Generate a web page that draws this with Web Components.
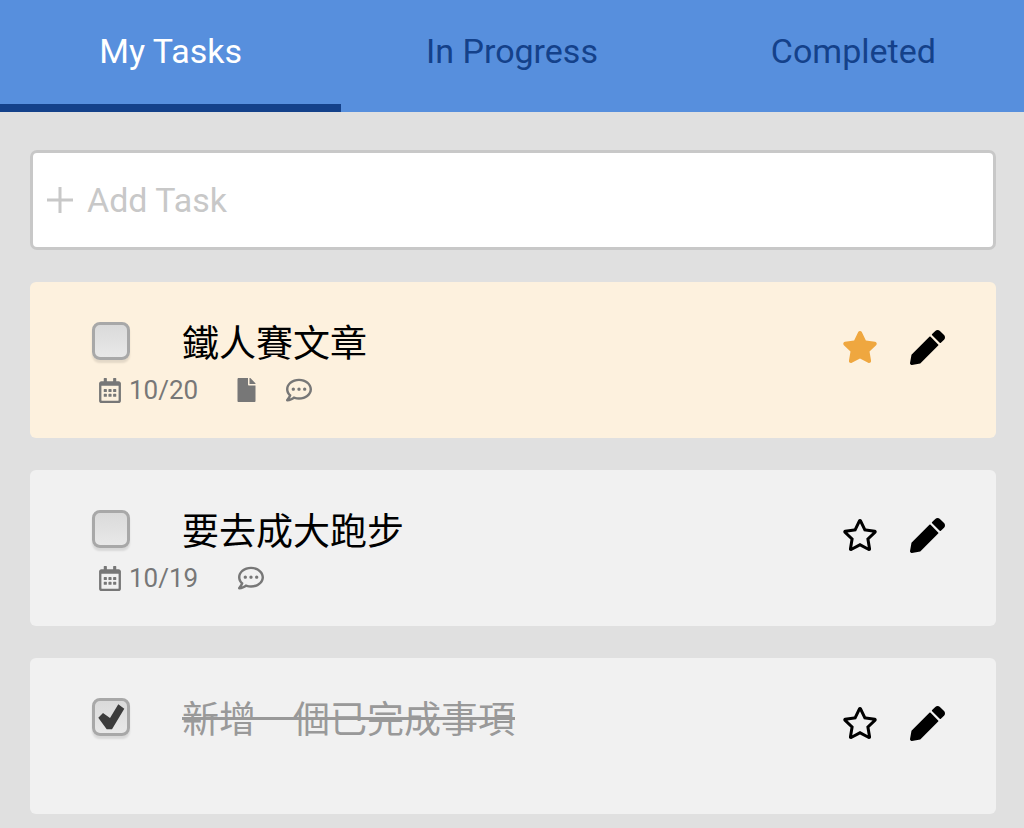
<!DOCTYPE html>
<html lang="zh-Hant"><head><meta charset="utf-8"><title>Tasks</title>
<style>
html,body{margin:0;padding:0;background:#e0e0e0}
body{font-family:Roboto,"Noto Sans CJK TC",sans-serif;height:828px;overflow:hidden}
</style></head>
<body>
<task-app>
  <task-tabs slot="tabs">
    <tab-item active>My Tasks</tab-item>
    <tab-item>In Progress</tab-item>
    <tab-item>Completed</tab-item>
  </task-tabs>
  <add-task placeholder="Add Task"></add-task>
  <task-card title-text="鐵人賽文章" starred date="10/20" file comment></task-card>
  <task-card title-text="要去成大跑步" date="10/19" comment></task-card>
  <task-card title-text="新增一個已完成事項" done></task-card>
</task-app>
<script>
const P={
 star:['0 0 576 512','M259.3 17.8L194 150.2 47.9 171.5c-26.2 3.8-36.7 36.1-17.7 54.6l105.7 103-25 145.5c-4.5 26.3 23.2 46 46.4 33.7L288 439.6l130.7 68.7c23.2 12.2 50.9-7.4 46.4-33.7l-25-145.5 105.7-103c19-18.5 8.5-50.8-17.7-54.6L382 150.2 316.7 17.8c-11.7-23.6-45.6-23.9-57.4 0z'],
 starO:['0 0 576 512','M528.1 171.5L382 150.2 316.7 17.8c-11.7-23.6-45.6-23.9-57.4 0L194 150.2 47.9 171.5c-26.2 3.8-36.7 36.1-17.7 54.6l105.7 103-25 145.5c-4.5 26.3 23.2 46 46.4 33.7L288 439.6l130.7 68.7c23.2 12.2 50.9-7.4 46.4-33.7l-25-145.5 105.7-103c19-18.5 8.5-50.8-17.7-54.6zM388.6 312.3l23.7 138.4L288 385.4l-124.3 65.3 23.7-138.4-100.6-98 139-20.2 62.2-126 62.2 126 139 20.2-100.6 98z'],
 pen:['0 0 512 512','M497.9 142.1l-46.1 46.1c-4.7 4.7-12.3 4.7-17 0l-111-111c-4.7-4.7-4.7-12.3 0-17l46.1-46.1c18.7-18.7 49.1-18.7 67.9 0l60.1 60.1c18.8 18.7 18.8 49.1 0 67.9zM284.2 99.8L21.6 362.4.4 483.9c-2.9 16.4 11.4 30.6 27.8 27.8l121.5-21.3 262.6-262.6c4.7-4.7 4.7-12.3 0-17l-111-111c-4.8-4.7-12.4-4.7-17.1 0z'],
 cal:['0 0 448 512','M148 288h-40c-6.6 0-12-5.4-12-12v-40c0-6.6 5.4-12 12-12h40c6.6 0 12 5.4 12 12v40c0 6.6-5.4 12-12 12zm108-12v-40c0-6.6-5.4-12-12-12h-40c-6.6 0-12 5.4-12 12v40c0 6.6 5.4 12 12 12h40c6.6 0 12-5.4 12-12zm96 0v-40c0-6.6-5.4-12-12-12h-40c-6.6 0-12 5.4-12 12v40c0 6.6 5.4 12 12 12h40c6.6 0 12-5.4 12-12zm-96 96v-40c0-6.6-5.4-12-12-12h-40c-6.6 0-12 5.4-12 12v40c0 6.6 5.4 12 12 12h40c6.6 0 12-5.4 12-12zm-96 0v-40c0-6.6-5.4-12-12-12h-40c-6.6 0-12 5.4-12 12v40c0 6.6 5.4 12 12 12h40c6.6 0 12-5.4 12-12zm192 0v-40c0-6.6-5.4-12-12-12h-40c-6.6 0-12 5.4-12 12v40c0 6.6 5.4 12 12 12h40c6.6 0 12-5.4 12-12zm96-260v352c0 26.5-21.5 48-48 48H48c-26.5 0-48-21.5-48-48V112c0-26.5 21.5-48 48-48h48V12c0-6.6 5.4-12 12-12h40c6.6 0 12 5.4 12 12v52h128V12c0-6.6 5.4-12 12-12h40c6.6 0 12 5.4 12 12v52h48c26.5 0 48 21.5 48 48zm-48 346V160H48v298c0 3.3 2.7 6 6 6h340c3.3 0 6-2.7 6-6z'],
 file:['0 0 384 512','M224 136V0H24C10.7 0 0 10.7 0 24v464c0 13.3 10.7 24 24 24h336c13.3 0 24-10.7 24-24V160H248c-13.2 0-24-10.8-24-24zm160-14.1v6.1H256V0h6.1c6.4 0 12.5 2.5 17 7l97.9 98c4.5 4.5 7 10.6 7 16.9z'],
 comment:['0 0 512 512','M144 208c-17.7 0-32 14.3-32 32s14.3 32 32 32 32-14.3 32-32-14.3-32-32-32zm112 0c-17.7 0-32 14.3-32 32s14.3 32 32 32 32-14.3 32-32-14.3-32-32-32zm112 0c-17.7 0-32 14.3-32 32s14.3 32 32 32 32-14.3 32-32-14.3-32-32-32zM256 32C114.6 32 0 125.1 0 240c0 47.6 19.9 91.2 52.9 126.3C38 405.7 7 439.1 6.5 439.5c-6.6 7-8.4 17.2-4.6 26S14.4 480 24 480c61.5 0 110-25.7 139.1-46.3C192 442.8 223.2 448 256 448c141.4 0 256-93.1 256-208S397.4 32 256 32zm0 368c-26.7 0-53.1-4.1-78.4-12.1l-22.7-7.2-19.5 13.8c-14.3 10.1-33.9 21.4-57.5 29 7.3-12.1 14.4-25.7 19.9-40.2l10.6-28.1-20.6-21.8C69.7 314.1 48 282.2 48 240c0-88.2 93.3-160 208-160s208 71.8 208 160-93.3 160-208 160z']
};
const icon=(n,w,h,c)=>`<svg viewBox="${P[n][0]}" width="${w}" height="${h}" fill="${c}" aria-hidden="true"><path d="${P[n][1]}"/></svg>`;
class Base extends HTMLElement{
  constructor(){super();this.attachShadow({mode:'open'})}
}
customElements.define('task-app',class extends Base{
  connectedCallback(){this.shadowRoot.innerHTML=`<style>
    :host{display:block;width:1024px}
    main{display:flex;flex-direction:column;gap:32px;padding:38px 28px 0 30px}
  </style><slot name="tabs"></slot><main><slot></slot></main>`}
});
customElements.define('task-tabs',class extends Base{
  connectedCallback(){this.shadowRoot.innerHTML=`<style>
    :host{display:grid;grid-template-columns:repeat(3,1fr);height:112px;background:#578fdd}
  </style><slot></slot>`}
});
customElements.define('tab-item',class extends Base{
  connectedCallback(){this.shadowRoot.innerHTML=`<style>
    :host{display:flex;align-items:center;justify-content:center;box-sizing:border-box;height:112px;padding-bottom:3px;border-bottom:8px solid transparent;color:#14418a;font:34px/40px Roboto,sans-serif}
    :host([active]){color:#fff;border-bottom-color:#14418a}
  </style><slot></slot>`}
});
customElements.define('add-task',class extends Base{
  connectedCallback(){this.shadowRoot.innerHTML=`<style>
    :host{display:flex;align-items:center;gap:14px;box-sizing:border-box;height:100px;padding:0 14px;background:#fff;border:3px solid #c8c8c8;border-radius:7px;color:#c8c8c8;font:34px/40px Roboto,sans-serif}
    svg{display:block;flex:none}
  </style><svg width="26" height="26" viewBox="0 0 26 26"><path d="M13 0v26M0 13h26" stroke="#c8c8c8" stroke-width="3"/></svg><span>${this.getAttribute('placeholder')}</span>`}
});
customElements.define('task-check',class extends Base{
  connectedCallback(){this.shadowRoot.innerHTML=`<style>
    :host{display:block;box-sizing:border-box;width:38px;height:38px;border:3px solid #a8a8a8;border-radius:8px;background:linear-gradient(#dadada,#e8e8e8);box-shadow:0 3px 2px rgba(0,0,0,.1);flex:none}
    svg{display:block;margin:-3px}
  </style>${this.hasAttribute('checked')?'<svg width="38" height="38" viewBox="0 0 38 38"><polygon fill="#3c3c3c" points="6.3,19.7 11,15 18,20 26.3,6.3 32.3,10.7 20,31.3 14.7,31.3"/></svg>':''}`}
});
customElements.define('task-card',class extends Base{
  connectedCallback(){
    const a=n=>this.hasAttribute(n),date=this.getAttribute('date');
    const done=a('done'),starred=a('starred');
    let meta='';
    if(date)meta+=`<span class="date">${icon('cal',22,25,'#777')}<b>${date}</b></span>`;
    if(a('file'))meta+=`<span class="file">${icon('file',21,24,'#777')}</span>`;
    if(a('comment'))meta+=`<span class="cm ${a('file')?'after-file':''}">${icon('comment',26,26,'#777')}</span>`;
    this.shadowRoot.innerHTML=`<style>
    :host{display:flex;box-sizing:border-box;height:156px;border-radius:6px;background:#f1f1f1;padding:40px 51px 0 62px}
    :host([starred]){background:#fdf1de}
    .main{flex:1;min-width:0}
    .row{display:flex;align-items:flex-start;gap:52px}
    h3{margin:-6px 0 0;font:400 37px/50px "Noto Sans CJK TC",sans-serif;color:#000}
    :host([done]) h3{color:#999;text-decoration:line-through;text-decoration-thickness:3px}
    .meta{display:flex;align-items:center;height:26px;margin:11px 0 0 7px;color:#777;font:26px/26px Roboto,sans-serif}
    .date{display:flex;align-items:center;gap:8px}
    b{font-weight:400}
    .file{margin-left:38px}
    .cm{margin-left:40px}
    .cm.after-file{margin-left:29px}
    span,svg{display:block}
    .acts{display:flex;gap:32px;align-items:center;height:36px;margin-top:7px}
    </style><div class="main"><div class="row"><task-check ${done?'checked':''}></task-check><h3>${this.getAttribute('title-text')}</h3></div>
    ${meta?`<div class="meta">${meta}</div>`:''}</div>
    <div class="acts">${starred?icon('star',36,32,'#efa73f'):icon('starO',36,32,'#000')}${icon('pen',35,35,'#000')}</div>`;
  }
});
</script>
</body></html>
